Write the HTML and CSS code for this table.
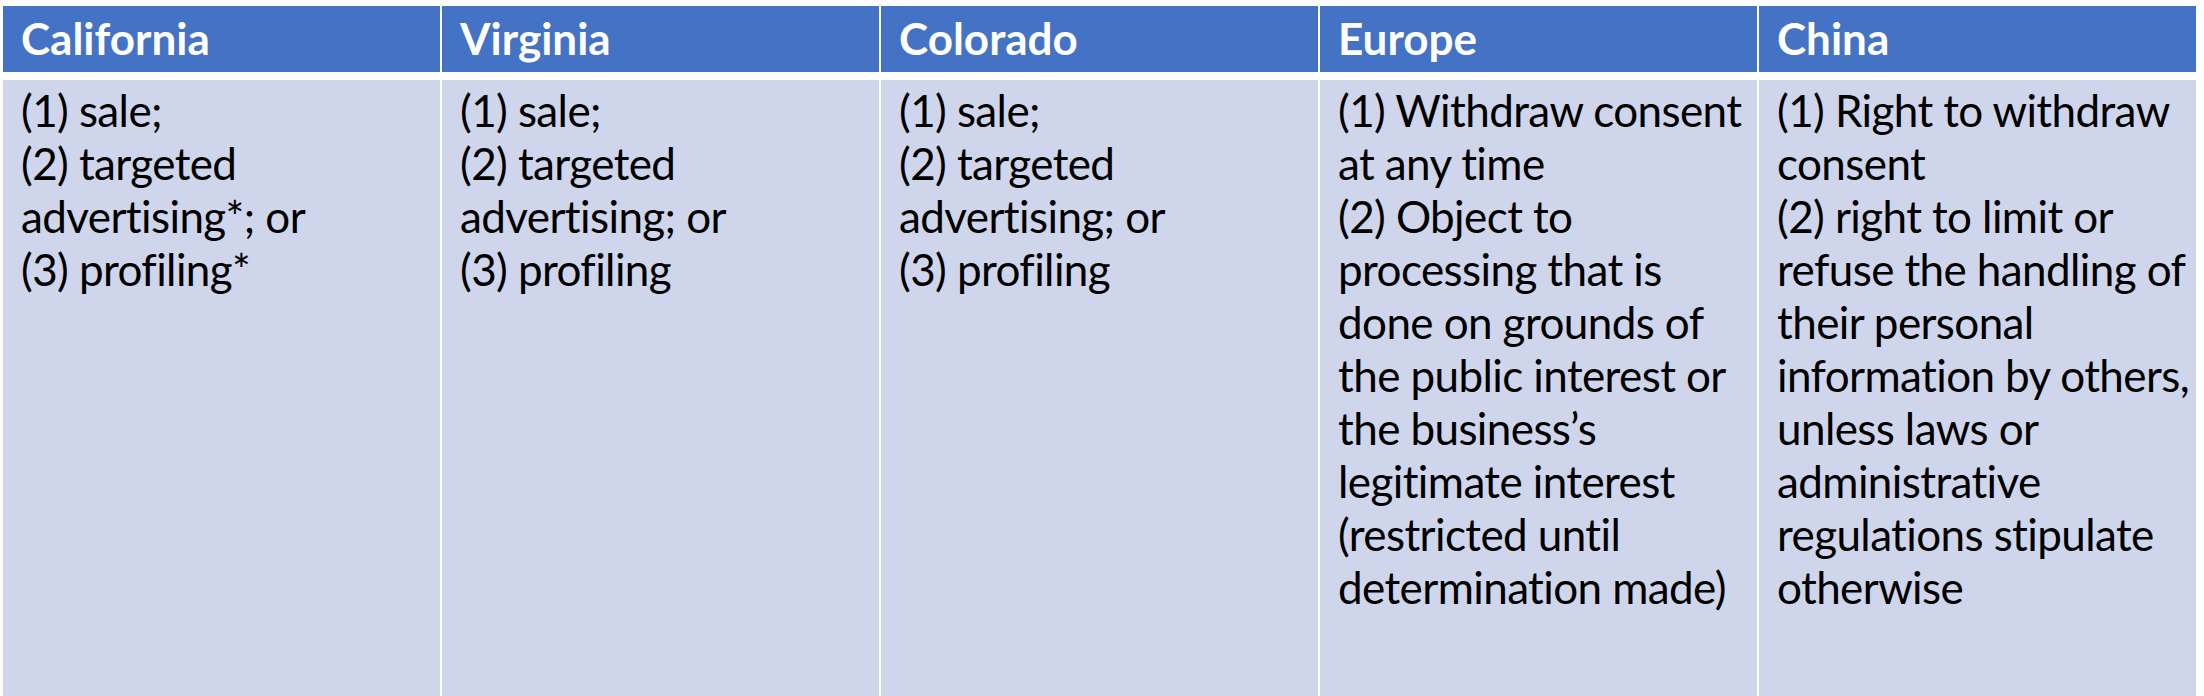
FILE: index.html
```html
<!DOCTYPE html>
<html lang="en">
<head>
<meta charset="utf-8">
<title>Opt-out rights comparison</title>
<link rel="stylesheet" href="styles.css">
</head>
<body>
<div class="table">
  <div class="th">California</div>
  <div class="th">Virginia</div>
  <div class="th">Colorado</div>
  <div class="th">Europe</div>
  <div class="th">China</div>

  <div class="td">
    <p>(1) sale;</p>
    <p>(2) targeted advertising*; or</p>
    <p>(3) profiling*</p>
  </div>
  <div class="td">
    <p>(1) sale;</p>
    <p>(2) targeted advertising; or</p>
    <p>(3) profiling</p>
  </div>
  <div class="td">
    <p>(1) sale;</p>
    <p>(2) targeted advertising; or</p>
    <p>(3) profiling</p>
  </div>
  <div class="td">
    <p>(1) Withdraw consent at any time</p>
    <p>(2) Object to processing that is done on grounds of the public interest or the business’s legitimate interest (restricted until determination made)</p>
  </div>
  <div class="td">
    <p>(1) Right to withdraw consent</p>
    <p>(2) right to limit or refuse the handling of their personal information by others, unless laws or administrative regulations stipulate otherwise</p>
  </div>
</div>
</body>
</html>
```
FILE: styles.css
```css
html, body {
  margin: 0;
  padding: 0;
  background: #ffffff;
  overflow: hidden;
}

body {
  width: 2204px;
  height: 696px;
}

.table {
  display: grid;
  grid-template-columns: repeat(5, 437px);
  grid-template-rows: 66px 620px;
  column-gap: 2px;
  row-gap: 8px;
  padding: 6px 0 0 3px;
  font-family: "Lato", "Noto Sans", sans-serif;
  font-size: 44px;
  line-height: 53px;
}

.th {
  background: #4472c4;
  color: #ffffff;
  font-weight: 700;
  padding: 6px 10px 0 18px;
}

.td {
  background: #cfd5ea;
  color: #000000;
  letter-spacing: -0.6px;
  padding: 4px 2px 0 18px;
}

.td p {
  margin: 0;
}
```
